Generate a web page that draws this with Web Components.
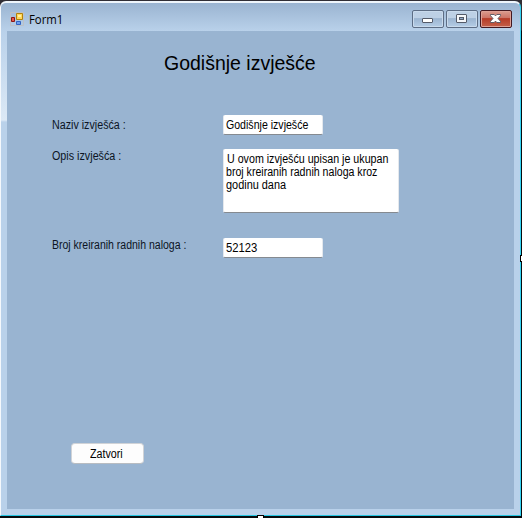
<!DOCTYPE html>
<html lang="hr"><head><meta charset="utf-8"><title>Form1</title>
<style>html,body{margin:0;height:100%;background:#05090c;overflow:hidden}</style></head>
<body>
<form-window>
  <caption-bar slot="caption"><fit-text w="34" style="--fs:12px;--lh:14px;--ff:'Open Sans'">Form1</fit-text></caption-bar>
  <fit-text class="title" w="152" style="--fs:20px;--lh:24px;margin:20px 0 0 157px">Godišnje izvješće</fit-text>
  <form-row style="margin-top:40px;height:34px">
    <fit-text slot="label" w="74" style="margin-top:4px">Naziv izvješća :</fit-text>
    <text-field><fit-text w="82">Godišnje izvješće</fit-text></text-field>
  </form-row>
  <form-row style="height:89px">
    <fit-text slot="label" w="69" style="margin-top:1px">Opis izvješća :</fit-text>
    <text-field style="--w:176px;--h:64px;--pt:4px"><fit-text w="161" style="margin-left:1px">U ovom izvješću upisan je ukupan</fit-text><fit-text w="151">broj kreiranih radnih naloga kroz</fit-text><fit-text w="60">godinu dana</fit-text></text-field>
  </form-row>
  <form-row style="height:205px">
    <fit-text slot="label" w="134" style="margin-top:1px">Broj kreiranih radnih naloga :</fit-text>
    <text-field><fit-text w="31">52123</fit-text></text-field>
  </form-row>
  <push-button><fit-text w="33">Zatvori</fit-text></push-button>
</form-window>
<script>
const define=(name,html,init)=>customElements.define(name,class extends HTMLElement{
  constructor(){super();this.attachShadow({mode:'open'}).innerHTML=html}
  connectedCallback(){init&&init(this)}
});
define('form-window',`<style>
:host{display:block;position:relative;width:522px;height:518px;overflow:hidden;background:linear-gradient(#302e35 0 30px,#070c0e 31px)}
.win{box-sizing:border-box;width:521px;height:515px;margin-top:1px;border-radius:6px 6px 0 0;
 border-top:2px solid #eef5fb;border-left:1px solid #f4f8fc;border-right:1px solid #34d4f4;border-bottom:1px solid #25c6e2;
 background:linear-gradient(#9ab4d1 0,#b9d1ea 28px,#dce9f6 117px,#b9d1ea 119px) left/6px 100% no-repeat,linear-gradient(#9ab4d1 0,#b9d1ea 28px)}
.client{margin:0 6px 0;height:478px;background:#99b4d1;overflow:hidden}
i{position:absolute;background:#fff;border:1px solid #000;box-sizing:border-box}
.b{left:257px;top:515px;width:7px;height:7px}.r{left:520px;top:255px;width:7px;height:7px}
</style><div class="win"><slot name="caption"></slot><div class="client"><slot></slot></div></div><i class="b"></i><i class="r"></i>`);
define('caption-bar',`<style>
:host{display:flex;box-sizing:border-box;height:28px;padding:7px 8px 0 9px}
.icon{width:14px;height:14px;margin:2px 5px 0 0;flex:none}.t{flex:1;padding-top:3px}
.buttons{display:flex;gap:2px;height:18px}
</style><svg class="icon" viewBox="0 0 14 14"><path d="M.5.5h13v13H.5z" fill="none" stroke="#bdc1c6"/><path d="M1.5 5.5h3v4h-3z" fill="#e3574c" stroke="#8f1612"/><path d="M6.5 1.5h6v6h-6z" fill="#ffd75a" stroke="#b38209"/><path d="M8 3h3v2H8z" fill="#fff1a4"/><path d="M6.5 9.5h4v3h-4z" fill="#6d9ff0" stroke="#3062c2"/></svg><div class="t"><slot></slot></div><div class="buttons"><window-button kind="min"></window-button><window-button kind="max"></window-button><window-button kind="close"></window-button></div>`);
const glyphs={
 min:'<rect x="10.5" y="8.5" width="10" height="4" rx=".5" fill="#fff" stroke="#545a68"/>',
 max:'<rect x="10.5" y="4.5" width="10" height="8" rx=".5" fill="#f4f6f9" stroke="#545a68"/><rect x="13.5" y="7.5" width="4" height="2" fill="#91a9c6" stroke="#545a68"/>',
 close:'<path d="M10.5 4.5h3.7l1.3 1.4 1.3-1.4h3.7v1.2L18 8.5l2.5 2.8v1.2h-3.7l-1.3-1.4-1.3 1.4h-3.7v-1.2L13 8.5l-2.5-2.8z" fill="#fff" stroke="#53545f" stroke-width=".9"/>'};
define('window-button',`<style>
:host{display:block;box-sizing:border-box;width:32px;height:18px;border:1px solid #5d6d85;border-radius:2px;box-shadow:inset 0 0 0 1px #c9daec;background:linear-gradient(#bdd0e5 0 46%,#9bb4d0 47%,#b5cde6)}
:host([kind=close]){border-color:#431820;box-shadow:inset 0 0 0 1px #dda095;background:linear-gradient(#dc9d90,#cb7164 46%,#b63b27 47%,#c4604a)}
svg{display:block;margin:-1px}</style><svg width="32" height="18"></svg>`,e=>{
 e.shadowRoot.querySelector('svg').innerHTML=glyphs[e.getAttribute('kind')];
});
define('fit-text',`<style>
:host{display:block;font:var(--fs,12px)/var(--lh,13px) var(--ff,"Liberation Sans"),Arial,sans-serif;color:#000;white-space:nowrap}
:host([slot=label]){color:#0c1424}
span{display:inline-block;vertical-align:top;transform-origin:0 0}
</style><span><slot></slot></span>`,e=>{
 const s=e.shadowRoot.querySelector('span');s.style.transform='scaleX('+(+e.getAttribute('w')/s.offsetWidth)+')';
});
define('form-row',`<style>:host{display:grid;grid-template-columns:171px auto;align-items:start;padding-left:45px}</style><slot name="label"></slot><slot></slot>`);
define('text-field',`<style>:host{display:block;box-sizing:border-box;width:var(--w,100px);height:var(--h,20px);padding:var(--pt,4px) 0 0 2px;background:#fff;border:1px solid #e4e8ed;border-bottom-color:#858a90;border-radius:2px;border-top-width:0}</style><slot></slot>`);
define('push-button',`<style>:host{display:block;box-sizing:border-box;width:73px;height:21px;margin-left:64px;padding:4px 0 0 18px;background:#fdfdfd;border:1px solid #d0d3d7;border-bottom-color:#b8bcc1;border-radius:4px}</style><slot></slot>`);
</script></body></html>
